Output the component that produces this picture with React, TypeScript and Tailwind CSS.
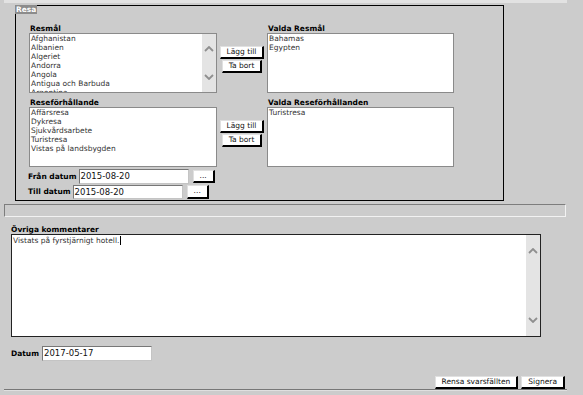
import type { ReactNode } from 'react';

const resmal = ['Afghanistan', 'Albanien', 'Algeriet', 'Andorra', 'Angola', 'Antigua och Barbuda', 'Argentina'];
const forhallanden = ['Affärsresa', 'Dykresa', 'Sjukvårdsarbete', 'Turistresa', 'Vistas på landsbygden'];

// små chevrons för de "inbyggda" rullningslisterna
const Chevron = ({ down }: { down?: boolean }) => (
    <svg width="10" height="6" viewBox="0 0 10 6">
        <path d={down ? 'M1 1 L5 5 L9 1' : 'M1 5 L5 1 L9 5'} stroke="#8f8f8f" strokeWidth="1.8" fill="none" />
    </svg>
);

const Scrollbar = ({ pad }: { pad: string }) => (
    <div className={`flex w-[14px] flex-col items-center justify-between bg-[#e4e4e4] ${pad}`}>
        <Chevron />
        <Chevron down />
    </div>
);

const Btn = ({ children, className = '' }: { children: ReactNode; className?: string }) => (
    <div
        className={`h-[13px] whitespace-nowrap border-t border-l border-t-[#e0e0e0] border-l-[#e0e0e0] border-r-2 border-b-2 border-r-black border-b-black bg-white px-[6px] text-[7.5px] leading-[10px] text-[#111] ${className}`}
    >
        {children}
    </div>
);

const Label = ({ children, className = '' }: { children: ReactNode; className?: string }) => (
    <div className={`text-[7.5px] font-bold leading-[8px] text-black ${className}`}>{children}</div>
);

const ListBox = ({ items, scroll, width }: { items: string[]; scroll?: boolean; width: string }) => (
    <div className={`flex h-[60px] overflow-hidden border border-[#8a8a8a] bg-white ${width}`}>
        <div className="flex-1 pl-px text-[7.5px] leading-[9px] text-[#333]">
            {items.map((it) => (
                <div key={it} className="whitespace-nowrap">{it}</div>
            ))}
        </div>
        {scroll && <Scrollbar pad="py-[12px]" />}
    </div>
);

const Input = ({ value, className = '' }: { value: string; className?: string }) => (
    <div
        className={`w-[110px] border border-t-[#777] border-l-[#777] border-r-[#c4c4c4] border-b-[#c4c4c4] bg-white pl-px text-[#111] ${className}`}
    >
        {value}
    </div>
);

const AddRemove = () => (
    <div className="flex w-[50px] flex-col items-center gap-px pt-[21px]">
        <Btn>Lägg till</Btn>
        <Btn>Ta bort</Btn>
    </div>
);

export default function App() {
    return (
        <div className="h-[395px] w-[583px] overflow-hidden bg-[#cccccc] font-['DejaVu_Sans',sans-serif]">
            <div className="ml-[4px] h-[3px] w-[563px] bg-[#e2e2e2]" />

            {/* Resa */}
            <div className="ml-[15px] mt-[2px] h-[196px] w-[489px] border border-black">
                <div className="-ml-px -mt-px w-fit bg-[#8c8c8c] px-px text-[7.5px] font-bold leading-[9px] text-white">Resa</div>

                <div className="mt-[11px] pl-[13px]">
                    <div className="flex items-start">
                        <div>
                            <Label className="pl-px">Resmål</Label>
                            <ListBox items={resmal} scroll width="w-[188px]" />
                        </div>
                        <AddRemove />
                        <div>
                            <Label className="pl-px">Valda Resmål</Label>
                            <ListBox items={['Bahamas', 'Egypten']} width="w-[187px]" />
                        </div>
                    </div>

                    <div className="mt-[6px] flex items-start">
                        <div>
                            <Label className="pl-px">Reseförhållande</Label>
                            <ListBox items={forhallanden} width="w-[188px]" />
                        </div>
                        <AddRemove />
                        <div>
                            <Label className="pl-px">Valda Reseförhållanden</Label>
                            <ListBox items={['Turistresa']} width="w-[187px]" />
                        </div>
                    </div>

                    <div className="-ml-px mt-[2px] flex items-center gap-[2px]">
                        <Label>Från datum</Label>
                        <Input value="2015-08-20" className="h-[15px] text-[8.5px] leading-[13px]" />
                        <Btn className="ml-[2px]">...</Btn>
                    </div>
                    <div className="-ml-px mt-px flex items-center gap-[2px]">
                        <Label>Till datum</Label>
                        <Input value="2015-08-20" className="h-[14px] text-[8.5px] leading-[12px]" />
                        <Btn className="ml-[2px] h-[14px]">...</Btn>
                    </div>
                </div>
            </div>

            <div className="ml-[4px] mt-[3px] h-[13px] w-[562px] border border-t-[#7d7d7d] border-l-[#7d7d7d] border-r-[#f2f2f2] border-b-[#f2f2f2]" />

            <Label className="mt-[9px] pl-[11px]">Övriga kommentarer</Label>
            <div className="ml-[11px] flex h-[103px] w-[530px] border border-[#222] bg-white">
                <div className="flex-1 pl-px pt-px text-[7.5px] leading-[9px] text-[#333]">
                    Vistats på fyrstjärnigt hotell.
                    <span className="ml-px inline-block h-[9px] w-px bg-black align-top" />
                </div>
                <Scrollbar pad="py-[13px]" />
            </div>

            <div className="mt-[9px] flex items-center gap-[3px] pl-[11px]">
                <Label>Datum</Label>
                <Input value="2017-05-17" className="h-[15px] text-[8.5px] leading-[13px]" />
            </div>

            <div className="mt-[15px] flex justify-end gap-[3px] pr-[18px]">
                <Btn className="px-[5px]">Rensa svarsfällten</Btn>
                <Btn className="px-[5px]">Signera</Btn>
            </div>
            <div className="ml-[4px] h-px w-[563px] bg-[#777]" />
            <div className="ml-[4px] h-px w-[563px] bg-[#e0e0e0]" />
        </div>
    );
}
